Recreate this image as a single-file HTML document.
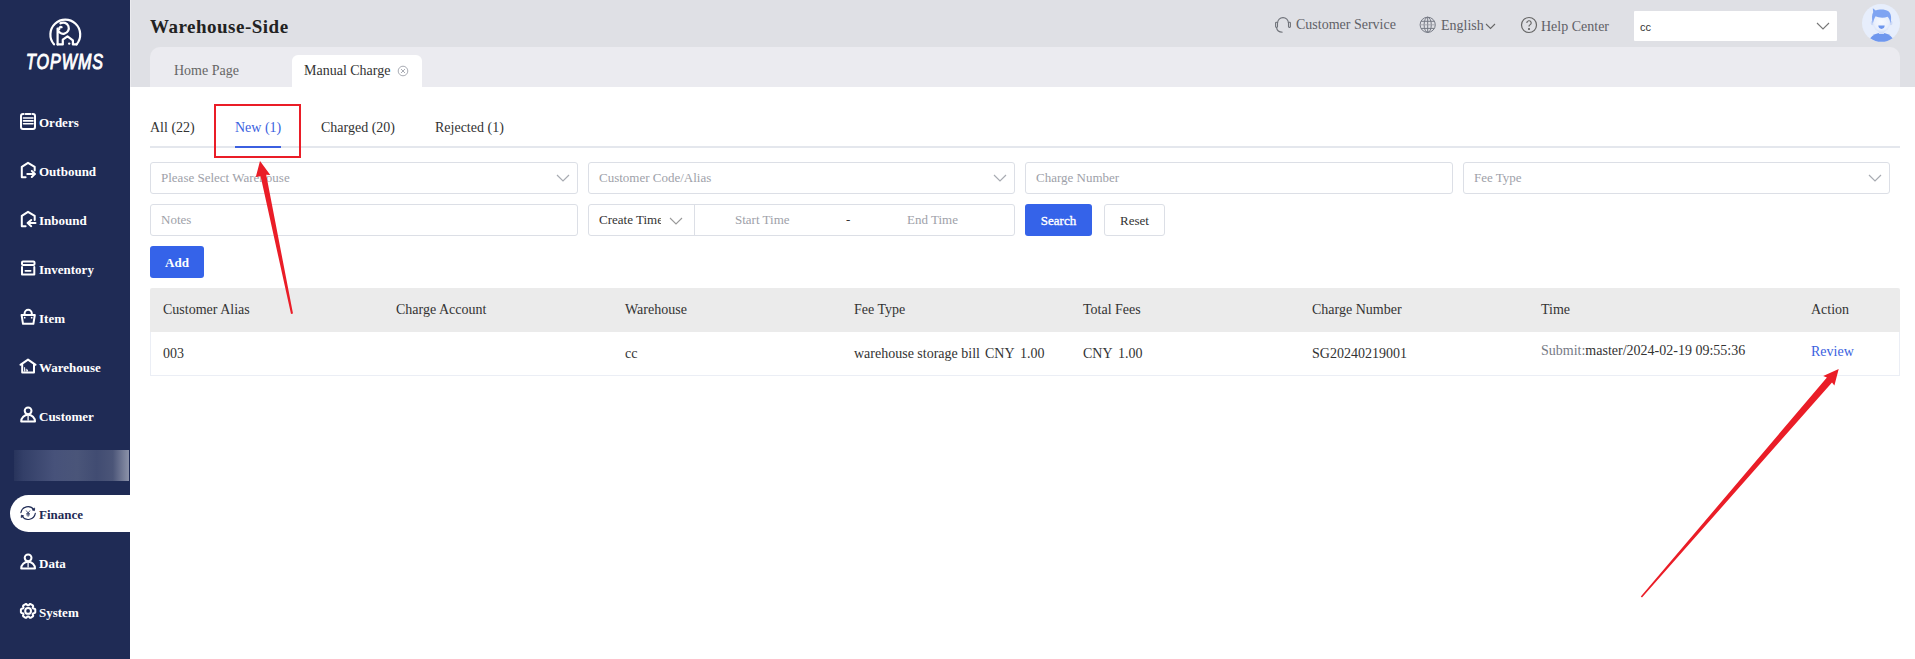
<!DOCTYPE html>
<html><head><meta charset="utf-8">
<style>
*{margin:0;padding:0;box-sizing:border-box}
html,body{width:1915px;height:659px;overflow:hidden;background:#fff;font-family:"Liberation Serif",serif;color:#333}
#side{position:absolute;left:0;top:0;width:130px;height:659px;background:#1f2b55}
#side .logo{position:absolute;left:0;top:0}
#side .brand{position:absolute;left:26px;top:49px;font-family:"Liberation Sans",sans-serif;font-style:italic;font-weight:normal;font-size:22px;line-height:26px;color:#fff;-webkit-text-stroke:1px #fff;letter-spacing:1.4px;transform:scaleX(0.73);transform-origin:0 0}
.mi{position:absolute;left:39px;height:24px;line-height:24px;margin-top:1px;color:#fff;font-weight:bold;font-size:13px;white-space:nowrap}
.mi.act2{color:#1f2b55}
.ic{position:absolute;left:16px;color:#fff}
.ic.dk{color:#1f2b55}
.act{position:absolute;left:10px;top:495px;width:120px;height:37px;background:#fff;border-radius:18.5px 0 0 18.5px}
.blur{position:absolute;left:14px;top:450px;width:115px;height:31px;background:linear-gradient(90deg,#28345c 0%,#333f68 8%,#47527a 35%,#4a5579 55%,#414c72 72%,#4b5578 86%,#8c92a9 100%)}
#hdr{position:absolute;left:130px;top:0;width:1785px;height:87px;background:#dfe0e5}
#title{position:absolute;left:150px;top:15px;font-size:19px;letter-spacing:0.5px;font-weight:bold;color:#222;line-height:23px}
#tabbar{position:absolute;left:150px;top:47px;width:1750px;height:40px;background:#ebebf0;border-radius:10px 10px 0 0}
.ttab{position:absolute;top:63px;font-size:14px;line-height:16px;color:#666}
#acttab{position:absolute;left:292px;top:55px;width:130px;height:32px;background:#fff;border-radius:6px 6px 0 0}
.hitem{position:absolute;top:17px;font-size:14px;line-height:16px;color:#5f6167;white-space:nowrap}
.hsel{position:absolute;left:1634px;top:11px;width:203px;height:30px;background:#fff;border-radius:1px}
#main{position:absolute;left:130px;top:87px;width:1785px;height:572px;background:#fff}
.ctab{position:absolute;top:120px;font-size:14px;line-height:16px;color:#333;white-space:nowrap}
.inp{position:absolute;height:32px;border:1px solid #dcdfe6;border-radius:3px;background:#fff}
.ph{position:absolute;left:10px;top:7px;font-size:13px;line-height:16px;color:#9ea1a9;white-space:nowrap}
.chev{position:absolute;right:7px;top:11px;width:14px;height:8px}
.btn{position:absolute;height:32px;border-radius:3px;font-size:13px;line-height:34px;text-align:center}
.th,.td{position:absolute;font-size:14px;line-height:16px;color:#333;white-space:nowrap}
.th{top:302px}
.td{top:346px}
</style></head><body>
<div id="side">
  <svg class="logo" width="130" height="80" viewBox="0 0 130 80">
    <g fill="none" stroke="#fff" stroke-width="2.2" stroke-linecap="round" stroke-linejoin="round">
      <path d="M54 44.3 A14.9 14.9 0 1 1 76.6 44.3"/>
      <path d="M60.4 23.3 A5.6 5.6 0 1 1 57.6 28.6 V44.4"/>
      <path d="M59.4 29 A1.5 1.5 0 0 1 61.6 27.2"/>
      <path d="M57.6 44.4 H62.8 V39.6 L67.5 36.4 L72.9 40.4 V44.4 H76.6"/>
    </g>
    <circle cx="69.2" cy="43.6" r="1.2" fill="#fff"/>
  </svg>
  <div class="brand">TOPWMS</div>
<svg class="ic" style="top:110px" width="24" height="24" viewBox="0 0 24 24" fill="none" stroke="currentColor" stroke-width="2" stroke-linejoin="round" stroke-linecap="round"><path d="M7.5 4H7a2 2 0 0 0-2 2v11a2 2 0 0 0 2 2h10a2 2 0 0 0 2-2V6a2 2 0 0 0-2-2h-.5"/><path d="M9.5 4h5"/><path d="M7.5 8h9.5M7.5 10.9h9.5M7.5 13.8h9.5" stroke-width="1.6"/></svg><div class="mi" style="top:110px">Orders</div>
<svg class="ic" style="top:159px" width="24" height="24" viewBox="0 0 24 24" fill="none" stroke="currentColor" stroke-width="2" stroke-linejoin="round" stroke-linecap="round"><path d="M9.6 18.2H5.8V7.8L12 3.8L18.7 7.8V11.6"/><path d="M11.3 14.9H19M15.8 12L19 14.9L15.8 18"/></svg><div class="mi" style="top:159px">Outbound</div>
<svg class="ic" style="top:208px" width="24" height="24" viewBox="0 0 24 24" fill="none" stroke="currentColor" stroke-width="2" stroke-linejoin="round" stroke-linecap="round"><path d="M9.6 18.2H5.8V7.8L12 3.8L18.7 7.8V12"/><path d="M19.5 15.1H11.6M15.2 12L11.6 15.1L15.2 18.2"/></svg><div class="mi" style="top:208px">Inbound</div>
<svg class="ic" style="top:257px" width="24" height="24" viewBox="0 0 24 24" fill="none" stroke="currentColor" stroke-width="2" stroke-linejoin="round" stroke-linecap="round"><rect x="6" y="4.6" width="12.5" height="3.4" rx="1"/><path d="M6 10V17.6H18.3V10"/><path d="M9.4 13.8H14.6" stroke-width="1.8"/></svg><div class="mi" style="top:257px">Inventory</div>
<svg class="ic" style="top:306px" width="24" height="24" viewBox="0 0 24 24" fill="none" stroke="currentColor" stroke-width="2" stroke-linejoin="round" stroke-linecap="round"><path d="M8.6 8.8V7.4A3.6 3.6 0 0 1 15.8 7.4V8.8"/><path d="M5.6 9H18.8L17.4 17.8H7Z"/><circle cx="8.7" cy="11.7" r=".9" fill="currentColor" stroke="none"/><circle cx="15.7" cy="11.7" r=".9" fill="currentColor" stroke="none"/></svg><div class="mi" style="top:306px">Item</div>
<svg class="ic" style="top:355px" width="24" height="24" viewBox="0 0 24 24" fill="none" stroke="currentColor" stroke-width="2" stroke-linejoin="round" stroke-linecap="round"><path d="M4.4 9.8L12 4.6L19.6 9.8"/><path d="M6.2 9.6V17.4H18V9.6"/><path d="M8.6 16.2V12.6M10.2 16.2V14.2M11.4 16.2V15" stroke-width="1"/></svg><div class="mi" style="top:355px">Warehouse</div>
<svg class="ic" style="top:404px" width="24" height="24" viewBox="0 0 24 24" fill="none" stroke="currentColor" stroke-width="2" stroke-linejoin="round" stroke-linecap="round"><circle cx="12.1" cy="6.8" r="3.4"/><path d="M5.2 17.6A6.9 6.8 0 0 1 19 17.6Z"/><path d="M12.1 12V16" stroke-width="1.3"/></svg><div class="mi" style="top:404px">Customer</div>
<div class="act"></div>
<svg class="ic dk" style="top:502px" width="24" height="24" viewBox="0 0 24 24" fill="none" stroke="currentColor" stroke-width="2" stroke-linejoin="round" stroke-linecap="round"><path d="M4.9 10.6A7.2 7.2 0 0 1 17.8 7.6" stroke-width="1.15"/><path d="M19.3 11.4A7.2 7.2 0 0 1 6.2 14.2" stroke-width="1.15"/><path d="M18.6 6.4L18.5 8.6L16.5 8Z" fill="currentColor" stroke-width=".8"/><path d="M5.2 15.2L5.4 13.1L7.4 13.8Z" fill="currentColor" stroke-width=".8"/><path d="M10.4 8.8L12.1 11L13.8 8.8M12.1 11V14.4M10.6 11.6H13.6M10.6 12.9H13.6" stroke-width="1" opacity=".75"/></svg><div class="mi act2" style="top:502px">Finance</div>
<svg class="ic" style="top:551px" width="24" height="24" viewBox="0 0 24 24" fill="none" stroke="currentColor" stroke-width="2" stroke-linejoin="round" stroke-linecap="round"><circle cx="12.1" cy="6.8" r="3.4"/><path d="M5.2 17.6A6.9 6.8 0 0 1 19 17.6Z"/><path d="M12.1 12V16" stroke-width="1.3"/></svg><div class="mi" style="top:551px">Data</div>
<svg class="ic" style="top:600px" width="24" height="24" viewBox="0 0 24 24" fill="none" stroke="currentColor" stroke-width="2" stroke-linejoin="round" stroke-linecap="round"><path d="M18.79 8.85 L19.29 9.63 L19.29 12.17 L18.79 12.95 L17.22 13.18 L16.63 14.19 L17.22 15.67 L16.79 16.49 L14.60 17.76 L13.67 17.72 L12.69 16.47 L11.51 16.47 L10.53 17.72 L9.60 17.76 L7.41 16.49 L6.98 15.67 L7.57 14.19 L6.98 13.18 L5.41 12.95 L4.91 12.17 L4.91 9.63 L5.41 8.85 L6.98 8.62 L7.57 7.61 L6.98 6.13 L7.41 5.31 L9.60 4.04 L10.53 4.08 L11.51 5.33 L12.69 5.33 L13.67 4.08 L14.60 4.04 L16.79 5.31 L17.22 6.13 L16.63 7.61 L17.22 8.62Z"/><circle cx="12.1" cy="10.9" r="2.9"/></svg><div class="mi" style="top:600px">System</div>
  <div class="blur"></div>
</div>
<div id="hdr"></div>
<div style="position:absolute;left:130px;top:0;width:1px;height:87px;background:#ebebef"></div>
<div id="title">Warehouse-Side</div>
<div id="tabbar"></div>
<div class="ttab" style="left:174px">Home Page</div>
<div id="acttab"></div>
<div class="ttab" style="left:304px;color:#333">Manual Charge</div>
<svg style="position:absolute;left:397px;top:65px" width="12" height="12" viewBox="0 0 12 12" fill="none" stroke="#a9acb4" stroke-width="1"><circle cx="6" cy="6" r="4.8"/><path d="M4 4l4 4M8 4l-4 4"/></svg>

<svg style="position:absolute;left:1272px;top:14px" width="22" height="22" viewBox="0 0 22 22" fill="none" stroke="#6f7279" stroke-width="1.1"><path d="M5.6 9A5.4 5.4 0 0 1 16.4 9"/><rect x="3.6" y="8.2" width="1.9" height="5.2" rx=".8"/><rect x="16.5" y="8.2" width="1.9" height="5.2" rx=".8"/><path d="M4.6 13.6Q5 17.8 10.6 18.3"/></svg>
<div class="hitem" style="left:1296px">Customer Service</div>
<svg style="position:absolute;left:1418px;top:15px" width="20" height="20" viewBox="0 0 20 20" fill="none" stroke="#767a85" stroke-width="1"><circle cx="9.7" cy="9.8" r="7.6"/><ellipse cx="9.7" cy="9.8" rx="3.6" ry="7.6"/><path d="M9.7 2.2V17.4M3 6.3H16.4M3 13.4H16.4"/><path d="M2.1 9.8H17.3" stroke="#9a9ca4" stroke-width=".8"/></svg>
<div class="hitem" style="left:1441px;top:18px">English</div>
<svg style="position:absolute;left:1485px;top:23px" width="11" height="7" viewBox="0 0 11 7" fill="none" stroke="#666" stroke-width="1.1"><path d="M1 1l4.5 4.5L10 1"/></svg>
<svg style="position:absolute;left:1520px;top:16px" width="18" height="18" viewBox="0 0 18 18" fill="none" stroke="#666" stroke-width="1.2"><circle cx="9" cy="9" r="7.5"/><path d="M6.8 7a2.2 2.2 0 1 1 3 2c-.7.3-.8.8-.8 1.6"/><circle cx="9" cy="13" r=".5" fill="#666"/></svg>
<div class="hitem" style="left:1541px;top:19px">Help Center</div>
<div class="hsel"><span style="position:absolute;left:6px;top:9px;font-family:'Liberation Sans',sans-serif;font-size:11px;line-height:14px;color:#333">cc</span><svg style="position:absolute;left:1816px;margin-left:-1634px;top:11px" width="14" height="8" viewBox="0 0 14 8" fill="none" stroke="#777" stroke-width="1.1"><path d="M1 1l6 6 6-6"/></svg></div>
<svg style="position:absolute;left:1862px;top:4px" width="38" height="38" viewBox="0 0 38 38">
  <defs><radialGradient id="fg" cx="0.5" cy="0.45" r="0.6"><stop offset="0" stop-color="#f6f9ff"/><stop offset="0.7" stop-color="#e9effc"/><stop offset="1" stop-color="#cfdcf8"/></radialGradient></defs>
  <circle cx="19" cy="19" r="19" fill="#e7eefc"/>
  <path d="M8.2 34.2Q12 29.3 19.5 28.8Q27 29.3 30.6 34.2A19 19 0 0 1 8.2 34.2Z" fill="#6f97ee"/>
  <rect x="17" y="25" width="5" height="5" fill="#d3dff9"/>
  <ellipse cx="10.4" cy="19" rx="1.7" ry="2.3" fill="#cddaf7"/><ellipse cx="28.8" cy="19" rx="1.7" ry="2.3" fill="#cddaf7"/>
  <ellipse cx="19.5" cy="18.8" rx="8.6" ry="9.4" fill="url(#fg)"/>
  <path d="M10.8 19.5C9.6 14 9.8 10.5 11.2 8.2L10.8 4.2L13.8 6.6C16.5 5.2 23 5 26.4 7.2C29.4 9.6 29.6 14 28.6 19.5C27.9 16.5 27.2 14.4 25.6 12.8C22 14.2 16.2 13.8 13.6 12.2C12.3 14.2 11.5 16.6 10.8 19.5Z" fill="#7fa4f2"/>
  <path d="M16.3 21.6H22.7Q22.4 24.9 19.5 24.9Q16.6 24.9 16.3 21.6Z" fill="#6d96ee"/>
</svg>

<div id="main"></div>
<div class="ctab" style="left:150px">All (22)</div>
<div class="ctab" style="left:235px;color:#3b5fe0">New (1)</div>
<div class="ctab" style="left:321px">Charged (20)</div>
<div class="ctab" style="left:435px">Rejected (1)</div>
<div style="position:absolute;left:150px;top:146px;width:1750px;height:2px;background:#e4e7ed"></div>
<div style="position:absolute;left:235px;top:146px;width:46px;height:2px;background:#3b5fe0"></div>

<div class="inp" style="left:150px;top:162px;width:428px"><span class="ph">Please Select Warehouse</span><svg class="chev" viewBox="0 0 14 8" fill="none" stroke="#a8abb2" stroke-width="1.2"><path d="M1 1l6 6 6-6"/></svg></div>
<div class="inp" style="left:588px;top:162px;width:427px"><span class="ph">Customer Code/Alias</span><svg class="chev" viewBox="0 0 14 8" fill="none" stroke="#a8abb2" stroke-width="1.2"><path d="M1 1l6 6 6-6"/></svg></div>
<div class="inp" style="left:1025px;top:162px;width:428px"><span class="ph">Charge Number</span></div>
<div class="inp" style="left:1463px;top:162px;width:427px"><span class="ph">Fee Type</span><svg class="chev" viewBox="0 0 14 8" fill="none" stroke="#a8abb2" stroke-width="1.2"><path d="M1 1l6 6 6-6"/></svg></div>

<div class="inp" style="left:150px;top:204px;width:428px"><span class="ph">Notes</span></div>
<div class="inp" style="left:588px;top:204px;width:427px">
  <span class="ph" style="color:#333;width:62px;overflow:hidden">Create Time</span>
  <svg style="position:absolute;left:80px;top:12px" width="14" height="8" viewBox="0 0 14 8" fill="none" stroke="#999" stroke-width="1.1"><path d="M1 1l6 6 6-6"/></svg>
  <div style="position:absolute;left:105px;top:0;width:1px;height:30px;background:#dcdfe6"></div>
  <span class="ph" style="left:146px">Start Time</span>
  <span class="ph" style="left:257px;color:#333">-</span>
  <span class="ph" style="left:318px">End Time</span>
</div>
<div class="btn" style="left:1025px;top:204px;width:67px;background:#3563e9;color:#fff;-webkit-text-stroke:.35px #fff">Search</div>
<div class="btn" style="left:1104px;top:204px;width:61px;border:1px solid #dcdfe6;color:#333;line-height:32px">Reset</div>
<div class="btn" style="left:150px;top:246px;width:54px;background:#3563e9;color:#fff;font-weight:bold">Add</div>

<div style="position:absolute;left:150px;top:288px;width:1750px;height:44px;background:#ebebeb;border-radius:2px 2px 0 0"></div>
<div style="position:absolute;left:150px;top:332px;width:1750px;height:44px;border:1px solid #ebeef5;border-top:none"></div>
<div class="th" style="left:163px">Customer Alias</div>
<div class="th" style="left:396px">Charge Account</div>
<div class="th" style="left:625px">Warehouse</div>
<div class="th" style="left:854px">Fee Type</div>
<div class="th" style="left:1083px">Total Fees</div>
<div class="th" style="left:1312px">Charge Number</div>
<div class="th" style="left:1541px">Time</div>
<div class="th" style="left:1811px">Action</div>
<div class="td" style="left:163px">003</div>
<div class="td" style="left:625px">cc</div>
<div class="td" style="left:854px">warehouse storage bill <span style="margin-left:1.5px">CNY</span> <span style="margin-left:2.5px">1.00</span></div>
<div class="td" style="left:1083px">CNY <span style="margin-left:2.5px">1.00</span></div>
<div class="td" style="left:1312px">SG20240219001</div>
<div class="td" style="left:1541px;top:343px"><span style="color:#767a85">Submit:</span>master/2024-02-19 09:55:36</div>
<div class="td" style="left:1811px;top:344px;color:#3b5fe0">Review</div>

<svg style="position:absolute;left:0;top:0" width="1915" height="659" viewBox="0 0 1915 659">
  <rect x="215" y="105" width="85" height="52" fill="none" stroke="#ea1d27" stroke-width="2"/>
  <path d="M293.0 313.6 L266.2 174.8 L270.3 175.0 L260.0 161.0 L255.8 177.0 L260.6 176.2 L291.0 314.0 Z" fill="#ea1d27"/>
  <path d="M1642.0 597.5 L1832.0 382.5 L1834.4 385.5 L1838.7 369.0 L1823.2 376.1 L1826.9 377.6 L1640.8 596.5 Z" fill="#ea1d27"/>
</svg>
</body></html>
